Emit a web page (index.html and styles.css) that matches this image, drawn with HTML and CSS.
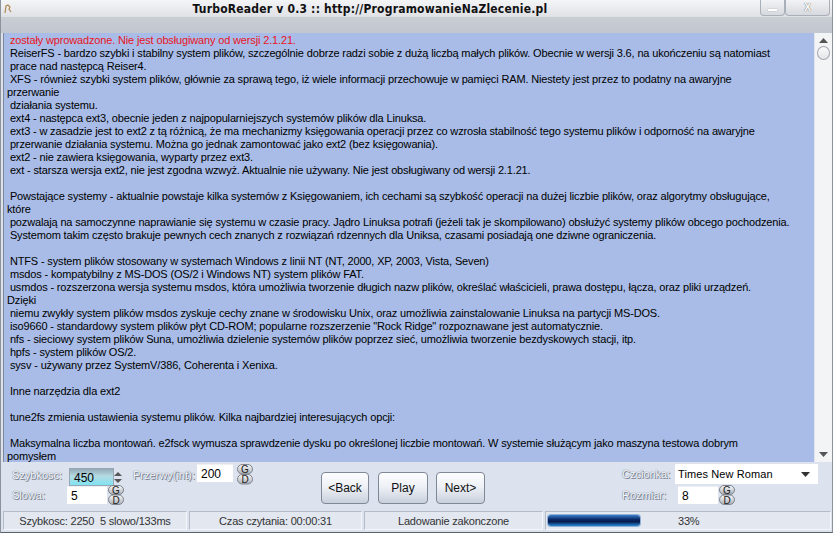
FILE: index.html
```html
<!DOCTYPE html>
<html>
<head>
<meta charset="utf-8">
<link rel="stylesheet" href="styles.css">
</head>
<body>
<div class="window">
  <div class="titlebar">
    <svg class="appicon" width="8" height="10" viewBox="0 0 8 10"><path d="M1 9 L2 2 L4 1 L6 3 L5 5 L7 8" fill="none" stroke="#b08850" stroke-width="1.2"/></svg>
    <div class="title">TurboReader v 0.3 :: http://ProgramowanieNaZlecenie.pl</div>
    <div class="tbtns">
      <div class="tbtn min"><span class="minbar"></span></div>
      <div class="tbtn close">X</div>
    </div>
  </div>
  <div class="topgap"></div>
  <div class="main">
    <div class="text">
      <div class="red"> zostały wprowadzone. Nie jest obsługiwany od wersji 2.1.21.</div>
      <div> ReiserFS - bardzo szybki i stabilny system plików, szczególnie dobrze radzi sobie z dużą liczbą małych plików. Obecnie w wersji 3.6, na ukończeniu są natomiast</div>
      <div> prace nad następcą Reiser4.</div>
      <div> XFS - również szybki system plików, głównie za sprawą tego, iż wiele informacji przechowuje w pamięci RAM. Niestety jest przez to podatny na awaryjne</div>
      <div>przerwanie</div>
      <div> działania systemu.</div>
      <div> ext4 - następca ext3, obecnie jeden z najpopularniejszych systemów plików dla Linuksa.</div>
      <div> ext3 - w zasadzie jest to ext2 z tą różnicą, że ma mechanizmy księgowania operacji przez co wzrosła stabilność tego systemu plików i odporność na awaryjne</div>
      <div> przerwanie działania systemu. Można go jednak zamontować jako ext2 (bez księgowania).</div>
      <div> ext2 - nie zawiera księgowania, wyparty przez ext3.</div>
      <div> ext - starsza wersja ext2, nie jest zgodna wzwyż. Aktualnie nie używany. Nie jest obsługiwany od wersji 2.1.21.</div>
      <div> </div>
      <div> Powstające systemy - aktualnie powstaje kilka systemów z Księgowaniem, ich cechami są szybkość operacji na dużej liczbie plików, oraz algorytmy obsługujące,</div>
      <div>które</div>
      <div> pozwalają na samoczynne naprawianie się systemu w czasie pracy. Jądro Linuksa potrafi (jeżeli tak je skompilowano) obsłużyć systemy plików obcego pochodzenia.</div>
      <div> Systemom takim często brakuje pewnych cech znanych z rozwiązań rdzennych dla Uniksa, czasami posiadają one dziwne ograniczenia.</div>
      <div> </div>
      <div> NTFS - system plików stosowany w systemach Windows z linii NT (NT, 2000, XP, 2003, Vista, Seven)</div>
      <div> msdos - kompatybilny z MS-DOS (OS/2 i Windows NT) system plików FAT.</div>
      <div> usmdos - rozszerzona wersja systemu msdos, która umożliwia tworzenie długich nazw plików, określać właścicieli, prawa dostępu, łącza, oraz pliki urządzeń.</div>
      <div>Dzięki</div>
      <div> niemu zwykły system plików msdos zyskuje cechy znane w środowisku Unix, oraz umożliwia zainstalowanie Linuksa na partycji MS-DOS.</div>
      <div> iso9660 - standardowy system plików płyt CD-ROM; popularne rozszerzenie "Rock Ridge" rozpoznawane jest automatycznie.</div>
      <div> nfs - sieciowy system plików Suna, umożliwia dzielenie systemów plików poprzez sieć, umożliwia tworzenie bezdyskowych stacji, itp.</div>
      <div> hpfs - system plików OS/2.</div>
      <div> sysv - używany przez SystemV/386, Coherenta i Xenixa.</div>
      <div> </div>
      <div> Inne narzędzia dla ext2</div>
      <div> </div>
      <div> tune2fs zmienia ustawienia systemu plików. Kilka najbardziej interesujących opcji:</div>
      <div> </div>
      <div> Maksymalna liczba montowań. e2fsck wymusza sprawdzenie dysku po określonej liczbie montowań. W systemie służącym jako maszyna testowa dobrym</div>
      <div>pomysłem</div>
    </div>
    <div class="scroll">
      <svg class="arr" width="9" height="5" viewBox="0 0 9 5"><path d="M0 5 L4.5 0 L9 5 Z" fill="#555"/></svg>
      <div class="thumb"></div>
      <div class="sfill"></div>
      <svg class="arr" width="9" height="5" viewBox="0 0 9 5"><path d="M0 0 L4.5 5 L9 0 Z" fill="#555"/></svg>
    </div>
  </div>
  <div class="controls">
    <div class="lgroup">
      <div class="row r1">
        <span class="lbl w57">Szybkosc:</span>
        <div class="inp sel">450</div>
        <div class="updown">
          <svg width="8" height="11" viewBox="0 0 8 11"><path d="M0 4 L4 0 L8 4 Z M0 7 L4 11 L8 7 Z" fill="#555"/></svg>
        </div>
        <span class="lbl w64 ml11">Przerwy(int):</span>
        <div class="inp w36">200</div>
        <svg class="gd" width="16" height="21" viewBox="0 0 16 21">
          <defs><linearGradient id="pg" x1="0" y1="0" x2="0" y2="1"><stop offset="0" stop-color="#fbfbfb"/><stop offset="1" stop-color="#a9aeb6"/></linearGradient></defs>
          <rect x="0.5" y="0.5" width="15" height="9.5" rx="4.7" fill="url(#pg)" stroke="#7c828c"/>
          <rect x="0.5" y="10.5" width="15" height="9.5" rx="4.7" fill="url(#pg)" stroke="#7c828c"/>
          <text x="8" y="9" text-anchor="middle" class="gdt">G</text>
          <text x="8" y="19" text-anchor="middle" class="gdt">D</text>
        </svg>
      </div>
      <div class="row r2">
        <span class="lbl w55">Slowa:</span>
        <div class="inp w40">5</div>
        <svg class="gd" width="16" height="20" viewBox="0 0 16 20">
          <defs><linearGradient id="pg2" x1="0" y1="0" x2="0" y2="1"><stop offset="0" stop-color="#fbfbfb"/><stop offset="1" stop-color="#a9aeb6"/></linearGradient></defs>
          <rect x="0.5" y="0.5" width="15" height="9" rx="4.5" fill="url(#pg2)" stroke="#7c828c"/>
          <rect x="0.5" y="10" width="15" height="9.5" rx="4.7" fill="url(#pg2)" stroke="#7c828c"/>
          <text x="8" y="8.8" text-anchor="middle" class="gdt">G</text>
          <text x="8" y="18.5" text-anchor="middle" class="gdt">D</text>
        </svg>
      </div>
    </div>
    <div class="buttons">
      <div class="btn w48">&lt;Back</div>
      <div class="btn w50">Play</div>
      <div class="btn w49">Next&gt;</div>
    </div>
    <div class="rgroup">
      <div class="row r1">
        <span class="lbl w53">Czcionka:</span>
        <div class="combo"><span>Times New Roman</span>
          <svg width="9" height="5" viewBox="0 0 9 5"><path d="M0 0 L4.5 5 L9 0 Z" fill="#333"/></svg>
        </div>
      </div>
      <div class="row r2">
        <span class="lbl w56">Rozmiar:</span>
        <div class="inp w40">8</div>
        <svg class="gd" width="16" height="20" viewBox="0 0 16 20">
          <defs><linearGradient id="pg3" x1="0" y1="0" x2="0" y2="1"><stop offset="0" stop-color="#fbfbfb"/><stop offset="1" stop-color="#a9aeb6"/></linearGradient></defs>
          <rect x="0.5" y="0.5" width="15" height="9" rx="4.5" fill="url(#pg3)" stroke="#7c828c"/>
          <rect x="0.5" y="10" width="15" height="9.5" rx="4.7" fill="url(#pg3)" stroke="#7c828c"/>
          <text x="8" y="8.8" text-anchor="middle" class="gdt">G</text>
          <text x="8" y="18.5" text-anchor="middle" class="gdt">D</text>
        </svg>
      </div>
    </div>
  </div>
  <div class="status">
    <div class="panel p1">Szybkosc: 2250&nbsp; 5 slowo/133ms</div>
    <div class="panel p2">Czas czytania: 00:00:31</div>
    <div class="panel p3">Ladowanie zakonczone</div>
    <div class="panel p4">
      <div class="bar"></div>
      <span class="pct">33%</span>
    </div>
  </div>
</div>
</body>
</html>
```
FILE: styles.css
```css
* { box-sizing: border-box; }
html, body { margin: 0; padding: 0; }
body {
  width: 833px;
  height: 533px;
  overflow: hidden;
  font-family: "Liberation Sans", Arial, sans-serif;
  font-size: 11px;
  background: #d9dee8;
}
.window {
  width: 833px;
  height: 533px;
  display: flex;
  flex-direction: column;
  background: #dce1eb;
  border-left: 1px solid #8d939c;
  border-right: 1px solid #8d939c;
  border-bottom: 1px solid #5e636b;
}
.titlebar {
  height: 17px;
  display: flex;
  align-items: center;
  background: linear-gradient(#f4f5f7, #dfe1e5);
}
.appicon { margin-left: 3px; }
.title {
  flex: 1;
  text-align: center;
  font-weight: bold;
  font-family: "DejaVu Sans Condensed", "Liberation Sans Narrow", "Liberation Sans", sans-serif;
  font-size: 12px;
  color: #111;
  letter-spacing: 0.2px;
  padding-right: 32px;
  padding-top: 1px;
  white-space: nowrap;
}
.tbtns { display: flex; height: 16px; margin-right: 2px; align-self: flex-start; }
.tbtn {
  border: 1px solid #aab0ba;
  border-top: none;
  border-radius: 0 0 4px 4px;
  background: linear-gradient(#f2f3f5, #d6d9de);
  display: flex;
  align-items: center;
  justify-content: center;
  color: #fff;
  font-weight: bold;
  font-size: 10px;
}
.tbtn.min { width: 25px; }
.tbtn.close { width: 45px; text-shadow: 0 0 1px #777, 0 0 1px #777; }
.minbar { width: 9px; height: 2px; background: #fff; box-shadow: 0 0 1px #666; margin-top: 5px; }
.topgap {
  height: 16px;
  background: linear-gradient(#c9cdd4, #c2c6ce);
}
.main {
  height: 429px;
  display: flex;
  margin-left: 2px;
}
.text {
  flex: 1;
  background: #a8bce7;
  color: #000;
  overflow: hidden;
  padding: 1px 0 0 3px;
  line-height: 13px;
  letter-spacing: -0.15px;
  border-left: 1px solid #7d8899;
}
.text div { white-space: pre; height: 13px; }
.text .red { color: #e8141e; }
.scroll {
  width: 18px;
  background: #f3f4f6;
  display: flex;
  flex-direction: column;
  align-items: center;
  padding: 5px 0 5px 0;
  border-left: 1px solid #e0e3e8;
}
.thumb {
  width: 13px;
  height: 14px;
  margin-top: 3px;
  border-radius: 50%;
  border: 1px solid #a4a8b0;
  background: linear-gradient(#fafafa, #e4e6ea);
}
.sfill { flex: 1; }
.controls {
  height: 48px;
  display: flex;
  padding-left: 11px;
  background: #dde3ee;
}
.row { display: flex; align-items: center; }
.lgroup { width: 241px; display: flex; flex-direction: column; }
.lgroup .r1 { height: 22px; margin-top: 2px; }
.lgroup .r2 { height: 18px; }
.lbl {
  color: #f8f9fb;
  text-shadow: 1px 1px 0 #7a8394, 0 0 1px #7a8394, 0 0 1px #7a8394;
  font-size: 11px;
  white-space: nowrap;
}
.w57 { width: 57px; }
.w55 { width: 55px; }
.w64 { width: 64px; }
.w53 { width: 53px; }
.w56 { width: 56px; }
.ml11 { margin-left: 11px; }
.inp {
  height: 18px;
  background: #fff;
  border-top: 1px solid #eef0f3;
  padding: 2px 0 0 4px;
  font-size: 12px;
  color: #000;
}
.inp.sel {
  width: 45px;
  align-self: flex-end;
  background: linear-gradient(180deg, #93a9b7 0%, #b5dbe3 45%, #7fe3f2 100%);
  border: 1px solid #9aa6b4;
}
.w36 { width: 36px; align-self: flex-start; }
.w40 { width: 40px; }
.updown { width: 8px; margin-left: 0; align-self: flex-end; height: 17px; display: flex; align-items: center; }
.gd { display: block; flex-shrink: 0; }
.lgroup .r1 .gd { align-self: flex-start; margin-left: 4px; }
.lgroup .r2 .gd { margin-left: 1px; }
.gdt { font-family: "Liberation Sans", sans-serif; font-size: 10px; fill: #222; }
.buttons {
  display: flex;
  gap: 9px;
  margin-left: 68px;
  margin-top: 10px;
  height: 32px;
}
.btn {
  height: 32px;
  border: 1px solid #7f8896;
  border-radius: 4px;
  background: linear-gradient(#fdfdfe 0%, #eef1f6 45%, #c9d0dc 100%);
  display: flex;
  align-items: center;
  justify-content: center;
  font-size: 12px;
  color: #111;
}
.btn.w48 { width: 48px; }
.btn.w50 { width: 50px; }
.btn.w49 { width: 49px; margin-left: -1px; }
.rgroup { margin-left: 137px; display: flex; flex-direction: column; }
.rgroup .r1 { height: 20px; margin-top: 2px; }
.rgroup .r2 { height: 20px; margin-top: 1px; }
.combo {
  width: 143px;
  height: 20px;
  background: #fff;
  display: flex;
  align-items: center;
  justify-content: space-between;
  padding: 0 8px 0 3px;
  font-size: 11px;
  letter-spacing: 0.1px;
  color: #000;
}
.rgroup .r2 .gd { margin-left: 1px; }
.status {
  height: 22px;
  display: flex;
  padding: 1px 1px 2px 2px;
  background: #dde3ee;
  gap: 2px;
}
.panel {
  border: 1px solid #b6bcc6;
  border-right-color: #f4f6f9;
  border-bottom-color: #f4f6f9;
  background: #e2e7f0;
  display: flex;
  align-items: center;
  justify-content: center;
  font-size: 11px;
  letter-spacing: -0.2px;
  color: #333;
}
.p1 { width: 184px; }
.p2 { width: 173px; }
.p3 { width: 179px; }
.p4 { flex: 1; position: relative; justify-content: flex-start; padding-left: 2px; }
.bar {
  width: 92px;
  height: 11px;
  border-radius: 3px;
  background: linear-gradient(180deg, #3a7fc8 0%, #0a2a68 40%, #061a4a 60%, #2a88d6 100%);
  box-shadow: 0 0 0 1px #8fb0d8;
}
.pct { position: absolute; left: 132px; top: 3px; color: #333; }
```
